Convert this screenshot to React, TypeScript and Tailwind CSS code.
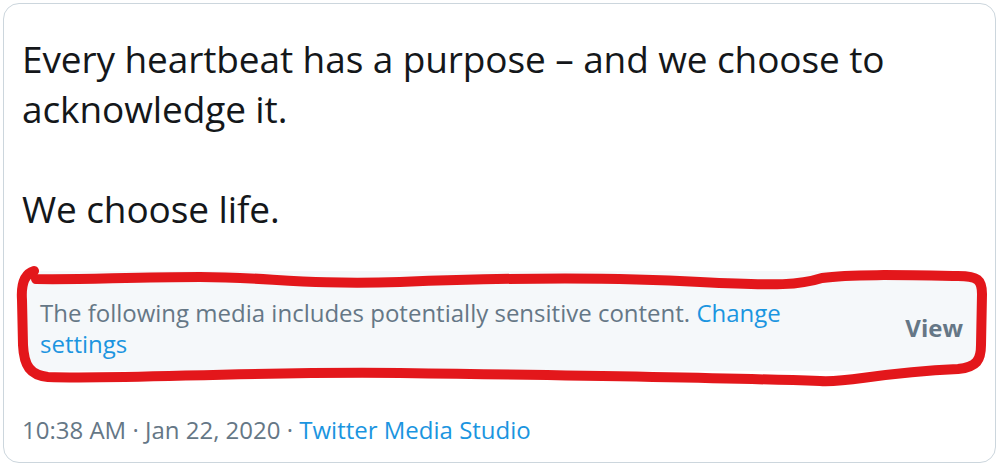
const font = {fontFamily: '"Open Sans", "Noto Sans", sans-serif'}

const RedScribble = () => (
  <svg className="pointer-events-none absolute inset-0" width="1000" height="466" viewBox="0 0 1000 466">
    <path
      d="M 34 271 C 24 274, 21 285, 22 300 L 23 345 C 24 366, 30 375, 48 377 C 120 380, 250 371, 400 373 C 550 375, 700 377, 820 381 C 850 383, 872 373, 958 369 C 977 367, 981 360, 981 345 L 982 294 C 982 280, 978 276, 958 276 C 900 275, 850 274, 822 278 C 800 285, 780 286, 700 282 C 600 276, 500 278, 400 282 C 300 285, 270 277, 200 277 C 130 277, 80 280, 36 279"
      fill="none" stroke="#e3171b" strokeWidth="10" strokeLinecap="round" strokeLinejoin="round"/>
  </svg>
)

export default function App() {
  return (
    <div className="relative h-[466px] w-[1000px] bg-white p-[3px]" style={font}>
      <div className="flex h-[460px] w-[993px] flex-col rounded-[16px] border border-[#ccd6dd] px-[18px]">
        <div className="mt-[30px] text-[37px] leading-[50px] tracking-[-0.1px] text-[#14171a]">
          <p>Every heartbeat has a purpose – and we choose to<br/>acknowledge it.</p>
          <p className="mt-[50px]">We choose life.</p>
        </div>
        <div className="mt-[37px] flex h-[100px] items-center justify-between rounded-[6px] bg-[#f5f8fa] pt-[14px] pl-[18px] pr-[14px]">
          <p className="w-[770px] text-[24px] leading-[31px] text-[#657786]">
            The following media includes potentially sensitive content. <span className="text-[#1b95e0]">Change</span>
            <br/>
            <span className="text-[#1b95e0]">settings</span>
          </p>
          <span className="text-[24px] font-bold text-[#657786]">View</span>
        </div>
        <div className="mt-[44px] text-[24px] leading-[30px] text-[#657786]">
          10:38 AM · Jan 22, 2020 · <span className="text-[#1b95e0]">Twitter Media Studio</span>
        </div>
      </div>
      <RedScribble/>
    </div>
  )
}
